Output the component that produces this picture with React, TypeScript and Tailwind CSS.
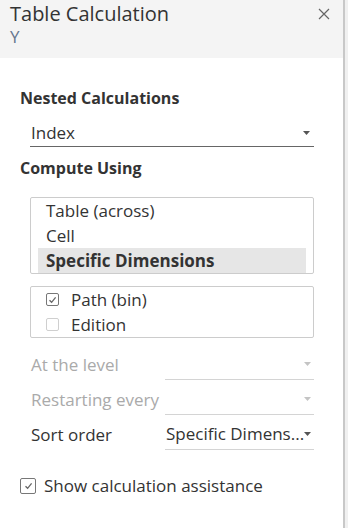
import React from "react";

// caret used by every dropdown
const Caret = ({ light }: { light?: boolean }) => (
  <svg width="7" height="4" viewBox="0 0 7 4" className="shrink-0">
    <path d="M0 0h7L3.5 4z" fill={light ? "#c4c4c4" : "#555"} />
  </svg>
);

const Check = ({ checked, size = 13 }: { checked: boolean; size?: number }) => (
  <div
    className={`flex shrink-0 items-center justify-center rounded-[2px] border bg-white ${
      checked ? "border-[#777]" : "border-[#cfcfcf]"
    }`}
    style={{ width: size, height: size }}
  >
    {checked && (
      <svg width="9" height="8" viewBox="0 0 9 8">
        <path d="M1.5 4.2 3.6 6.3 7.6 1.3" fill="none" stroke="#666" strokeWidth="1.3" />
      </svg>
    )}
  </div>
);

const fieldRow = [
  { label: "At the level", value: "", disabled: true },
  { label: "Restarting every", value: "", disabled: true },
  { label: "Sort order", value: "Specific Dimens...", disabled: false },
];

export default function App() {
  return (
    <div className="flex h-[528px] w-[348px] bg-white font-['Open_Sans',sans-serif] text-[#333]">
      <div className="flex w-[343px] flex-col">
        {/* header */}
        <div className="relative h-[58px] bg-[#f4f4f4] pl-[10px] pt-[1px]">
          <div className="text-[20px] leading-[26px] text-[#333]">Table Calculation</div>
          <div className="text-[17px] leading-[20px] text-[#66768f]">Y</div>
          <svg width="12" height="12" viewBox="0 0 12 12" className="absolute right-[13px] top-[8px]">
            <path d="M1 1l10 10M11 1 1 11" stroke="#666" strokeWidth="1.2" />
          </svg>
        </div>

        <div className="flex flex-col px-[20px]">
          <div className="mt-[29px] text-[16px] font-bold leading-[22px]">Nested Calculations</div>
          <div className="ml-[10px] mt-[10px] flex h-[28px] w-[284px] items-center justify-between border-b border-[#666] pl-[1px] pr-[4px] text-[17px]">
            <span>Index</span>
            <Caret />
          </div>

          <div className="mt-[10px] text-[16px] font-bold leading-[22px]">Compute Using</div>

          <div className="ml-[10px] mt-[18px] w-[284px] rounded-[2px] border border-[#ccc] px-[7px] text-[17px]">
            <div className="flex h-[25px] items-center pl-[8px]">Table (across)</div>
            <div className="flex h-[25px] items-center pl-[8px]">Cell</div>
            <div className="flex h-[25px] items-center bg-[#e6e6e6] pl-[8px] font-bold">Specific Dimensions</div>
          </div>

          <div className="ml-[10px] mt-[12px] w-[284px] rounded-[2px] border border-[#ccc] px-[15px] text-[17px]">
            <div className="flex h-[25px] items-center gap-[12px]">
              <Check checked />
              <span>Path (bin)</span>
            </div>
            <div className="flex h-[25px] items-center gap-[12px]">
              <Check checked={false} />
              <span>Edition</span>
            </div>
          </div>

          <div className="ml-[10px] mt-[7px] flex w-[284px] flex-col text-[17px]">
            {fieldRow.map((r) => (
              <div key={r.label} className="flex h-[35px] items-end">
                <div
                  className={`flex h-[31px] w-[135px] items-center whitespace-nowrap pl-[1px] ${
                    r.disabled ? "text-[#aaa]" : "text-[#333]"
                  }`}
                >
                  {r.label}
                </div>
                <div className="flex h-[31px] min-w-0 flex-1 items-center justify-between border-b border-[#d4d4d4] pl-[1px] pr-[3px]">
                  <span className="whitespace-nowrap">{r.value}</span>
                  <Caret light={r.disabled} />
                </div>
              </div>
            ))}
          </div>

          <div className="mt-[23px] flex items-center gap-[8px] text-[17px]">
            <Check checked size={16} />
            <span>Show calculation assistance</span>
          </div>
        </div>
      </div>
      <div className="w-[2px] bg-[#c8c8c8]" />
      <div className="flex-1 bg-[#f0f0f0]" />
    </div>
  );
}
